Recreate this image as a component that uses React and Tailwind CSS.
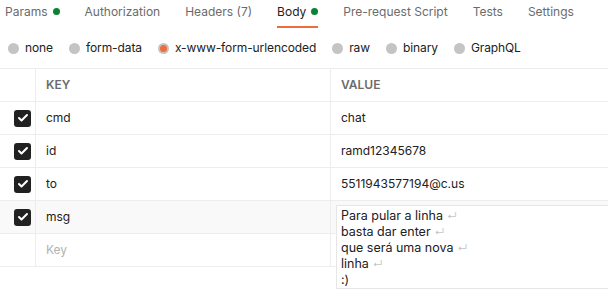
import { Check } from 'lucide-react'

const tabs = [
  { label: 'Params', dot: true },
  { label: 'Authorization' },
  { label: 'Headers (7)' },
  { label: 'Body', dot: true, active: true },
  { label: 'Pre-request Script' },
  { label: 'Tests' },
  { label: 'Settings' },
]

const bodyTypes = ['none', 'form-data', 'x-www-form-urlencoded', 'raw', 'binary', 'GraphQL']

const rows = [
  { key: 'cmd', value: 'chat' },
  { key: 'id', value: 'ramd12345678' },
  { key: 'to', value: '5511943577194@c.us' },
]

const msgLines = ['Para pular a linha', 'basta dar enter', 'que será uma nova', 'linha', ':)']

function CheckBox() {
  return (
    <div className="w-[17px] h-[17px] rounded-[3px] bg-[#212121] flex items-center justify-center">
      <Check className="w-[12px] h-[12px] text-white" strokeWidth={4} />
    </div>
  )
}

function Row({ checked, keyText, value, placeholder, shaded, children }) {
  return (
    <div className={`flex h-[33px] border-b border-[#ededed] ${shaded ? 'bg-[#f9f9f9]' : ''}`}>
      <div className="w-[36px] shrink-0 border-r border-[#ededed] flex items-center justify-end pr-[4px]">
        {checked && <CheckBox />}
      </div>
      <div className={`w-[295px] shrink-0 border-r border-[#ededed] flex items-center pl-[10px] ${placeholder ? 'text-[#b3b3b3]' : 'text-[#212121]'}`}>
        {keyText}
      </div>
      <div className="flex-1 flex items-center pl-[10px] text-[#212121] relative">
        {value}
        {children}
      </div>
    </div>
  )
}

export default function App() {
  return (
    <div className="w-[608px] h-[298px] bg-white overflow-hidden text-[12px] font-['Inter',sans-serif] whitespace-nowrap">
      {/* Tabs */}
      <div className="flex gap-[25px] pl-[5px] h-[28px]">
        {tabs.map((t) => (
          <div
            key={t.label}
            className={`flex items-center gap-[5px] h-full border-b-2 ${t.active ? 'border-[#f26b3a] text-[#212121]' : 'border-transparent text-[#6b6b6b]'}`}
          >
            <span className="-mt-[3px]">{t.label}</span>
            {t.dot && <span className="w-[7px] h-[7px] rounded-full bg-[#0a8133] -mt-[3px]" />}
          </div>
        ))}
      </div>

      {/* Body types */}
      <div className="flex items-center gap-[16px] pl-[8px] h-[40px] tracking-[-0.1px]">
        {bodyTypes.map((b) => (
          <div key={b} className="flex items-center gap-[6px] text-[#212121]">
            <span className="w-[11px] h-[11px] rounded-full bg-[#c4c4c4] flex items-center justify-center">
              {b === 'x-www-form-urlencoded' && <span className="w-[7px] h-[7px] rounded-full bg-[#f26b3a]" />}
            </span>
            {b}
          </div>
        ))}
      </div>

      {/* Table */}
      <div className="border-t border-[#ededed]">
        <div className="flex h-[33px] border-b border-[#ededed] text-[12px] font-semibold text-[#6b6b6b]">
          <div className="w-[36px] shrink-0 border-r border-[#ededed]" />
          <div className="w-[295px] shrink-0 border-r border-[#ededed] flex items-center pl-[10px]">KEY</div>
          <div className="flex-1 flex items-center pl-[10px]">VALUE</div>
        </div>
        {rows.map((r) => (
          <Row key={r.key} checked keyText={r.key} value={r.value} />
        ))}
        <Row checked keyText="msg" shaded>
          <div className="absolute left-[5px] top-[4px] w-[290px] h-[84px] bg-white border border-[#e6e6e6] pl-[4px] pt-[2px] text-[12.5px] leading-[15px] text-[#212121] z-10">
            {msgLines.map((l, i) => (
              <div key={i}>
                {l}
                {i < msgLines.length - 1 && <span className="text-[#c4c4c4] text-[10px] ml-[4px]">↵</span>}
              </div>
            ))}
          </div>
        </Row>
        <Row keyText="Key" placeholder />
      </div>
    </div>
  )
}
